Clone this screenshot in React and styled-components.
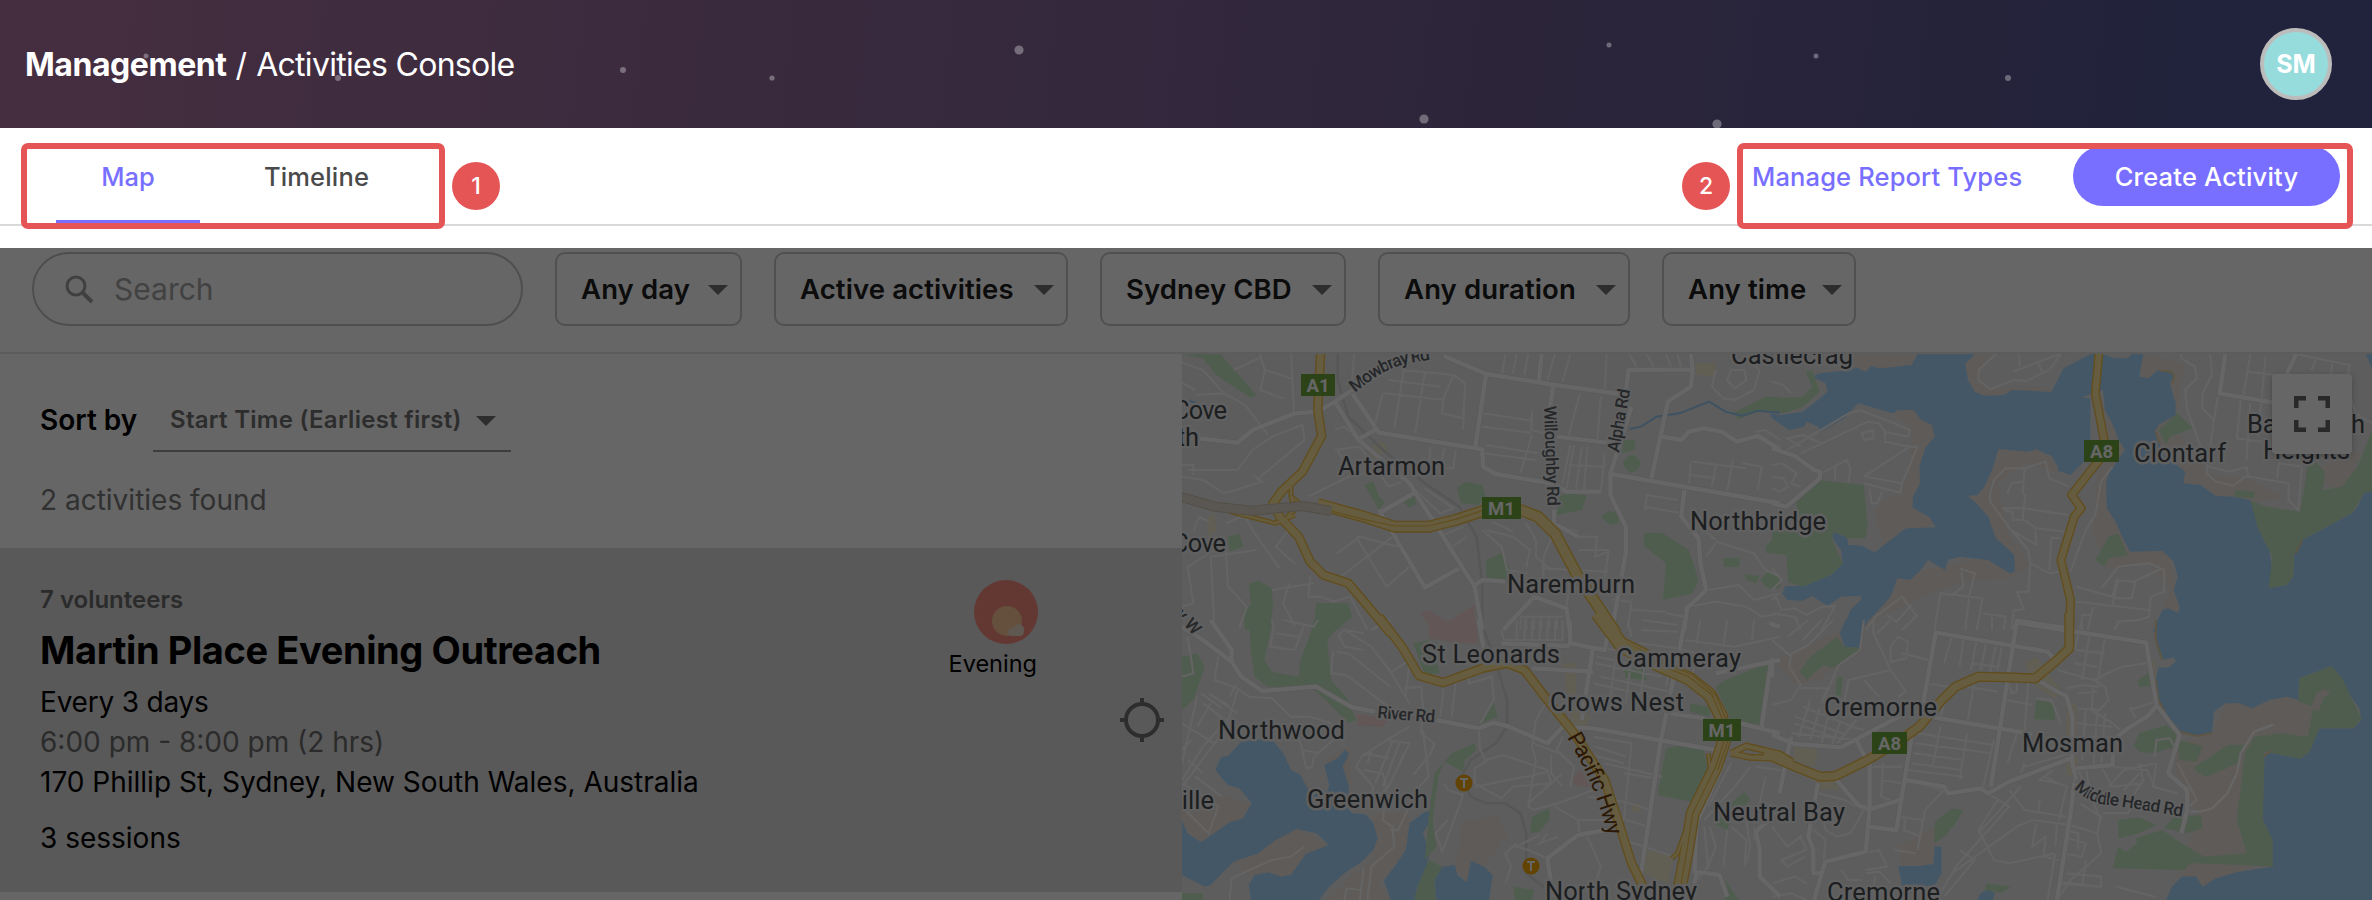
import React from "react";
import styled, { createGlobalStyle } from "styled-components";

const GlobalStyle = createGlobalStyle`
  * { box-sizing: border-box; }
  html, body { margin: 0; padding: 0; background: #fff; }
  body { font-family: Inter, "Liberation Sans", sans-serif; color: #000; }
`;

const Page = styled.div`
  position: relative;
  width: 2372px;
  height: 900px;
  overflow: hidden;
  display: flex;
  flex-direction: column;
`;

/* Header */
const Header = styled.header`
  position: relative;
  height: 128px;
  flex: none;
  display: flex;
  align-items: center;
  justify-content: space-between;
  padding: 0 40px 0 25px;
  background: linear-gradient(97deg, #452e40 0%, #3a2a3e 32%, #2b253a 66%, #21223b 92%, #21233d 100%);
`;
const Stars = styled.svg`
  position: absolute;
  inset: 0;
  width: 100%;
  height: 100%;
`;
const Title = styled.h1`
  position: relative;
  margin: 0;
  display: flex;
  gap: 9px;
  padding-top: 1px;
  font-size: 32px;
  line-height: 40px;
  font-weight: 400;
  color: #fff;
  white-space: nowrap;
`;
const Crumb = styled.span`
  font-weight: ${(p) => (p.$strong ? 700 : 400)};
  letter-spacing: ${(p) => p.$track || 0}px;
`;
const Avatar = styled.div`
  position: relative;
  width: 72px;
  height: 72px;
  border-radius: 50%;
  border: 4px solid #bcbcbc;
  background: #96dcdd;
  color: #fff;
  display: flex;
  align-items: center;
  justify-content: center;
  font-size: 25px;
  font-weight: 700;
`;

/* Tab bar */
const TabBar = styled.nav`
  height: 98px;
  flex: none;
  display: flex;
  justify-content: space-between;
  padding: 0 32px 0 56px;
  border-bottom: 2px solid #d9d9d9;
  background: #fff;
`;
const Tabs = styled.div`
  display: flex;
  gap: 20px;
`;
const Tab = styled.div`
  width: ${(p) => p.$w}px;
  display: flex;
  align-items: center;
  justify-content: center;
  padding-top: ${(p) => (p.$active ? 5 : 1)}px;
  border-bottom: ${(p) => (p.$active ? "4px solid #786eff" : "0")};
  color: ${(p) => (p.$active ? "#786eff" : "#4a4a4a")};
  font-size: 25.5px;
  font-weight: 500;
  letter-spacing: ${(p) => p.$track || 0}px;
`;
const Actions = styled.div`
  display: flex;
  align-items: center;
  gap: 52px;
  padding-top: 0;
`;
const LinkAction = styled.a`
  width: 269px;
  color: #786eff;
  font-size: 25.5px;
  font-weight: 500;
  letter-spacing: 0.15px;
  white-space: nowrap;
`;
const PrimaryButton = styled.button`
  width: 267px;
  height: 60px;
  padding: 0;
  border: 0;
  border-radius: 30px;
  background: #786eff;
  color: #fff;
  font: 500 25.5px Inter, sans-serif;
  letter-spacing: 0.2px;
`;

/* Filters */
const FilterBar = styled.section`
  height: 128px;
  flex: none;
  display: flex;
  align-items: flex-start;
  gap: 32px;
  padding: 26px 32px 0;
  border-bottom: 2px solid #e6e6e6;
`;
const SearchBox = styled.div`
  width: 491px;
  height: 74px;
  border: 2px solid #c4c4c4;
  border-radius: 37px;
  display: flex;
  align-items: center;
  gap: 20px;
  padding-left: 30px;
  color: #a6a6a6;
  font-size: 30px;
`;
const Select = styled.div`
  width: ${(p) => p.$w}px;
  height: 74px;
  border: 2px solid #c8c8d0;
  border-radius: 10px;
  display: flex;
  align-items: center;
  justify-content: space-between;
  padding: 0 12px 0 24px;
  font-size: 27.5px;
  font-weight: 600;
  color: #202020;
  white-space: nowrap;
  letter-spacing: 0.12px;
`;
const Caret = styled.span`
  flex: none;
  margin-top: 2px;
  border: 10px solid transparent;
  border-bottom: 0;
  border-top-color: #707070;
`;

/* Content */
const Content = styled.main`
  flex: 1;
  min-height: 0;
  display: flex;
`;
const ListPane = styled.section`
  width: 1182px;
  flex: none;
`;
const SortRow = styled.div`
  display: flex;
  align-items: flex-start;
  gap: 16px;
  padding: 32px 0 0 40px;
`;
const SortLabel = styled.div`
  width: 97px;
  font-size: 28px;
  line-height: 68px;
  font-weight: 600;
  white-space: nowrap;
`;
const SortSelect = styled.div`
  width: 358px;
  height: 66px;
  border-bottom: 2px solid #999;
  display: flex;
  align-items: center;
  justify-content: space-between;
  padding: 3px 15px 0 17px;
  font-size: 24px;
  font-weight: 600;
  color: #707070;
  letter-spacing: 0.28px;
  white-space: nowrap;
`;
const Found = styled.div`
  padding: 26px 0 28px 40px;
  font-size: 28px;
  line-height: 40px;
  color: #7a7a7a;
`;
const Card = styled.article`
  height: 344px;
  background: #dedede;
  display: flex;
  justify-content: space-between;
  padding: 32px 18px 0 40px;
`;
const CardText = styled.div`
  display: flex;
  flex-direction: column;
`;
const Line = styled.div`
  font-size: ${(p) => p.$size || 28}px;
  line-height: ${(p) => p.$lh || 40}px;
  font-weight: ${(p) => p.$weight || 400};
  color: ${(p) => (p.$muted ? "#6c6c6c" : "#000")};
  margin-top: ${(p) => p.$gap || 0}px;
  letter-spacing: ${(p) => p.$track || 0}px;
  white-space: nowrap;
`;
const CardSide = styled.div`
  display: flex;
  gap: 81px;
`;
const TimeOfDay = styled.div`
  width: 92px;
  display: flex;
  flex-direction: column;
  align-items: flex-end;
  font-size: 23.5px;
  line-height: 36px;
  svg { display: block; margin-right: 1px; margin-bottom: 2px; }
`;
const TimeName = styled.span`
  margin-right: 2px;
`;
const Locate = styled.svg`
  width: 44px;
  height: 44px;
  margin-top: 118px;
`;
const MapPane = styled.section`
  position: relative;
  flex: 1;
  overflow: hidden;
  background: #e8e8e8;
`;
const MapSvg = styled.svg`
  display: block;
  width: 1190px;
  height: 546px;
`;
const FullscreenButton = styled.div`
  position: absolute;
  top: 20px;
  right: 20px;
  width: 80px;
  height: 80px;
  background: #fff;
  border-radius: 4px;
  box-shadow: 0 2px 6px rgba(0, 0, 0, 0.25);
  display: flex;
  align-items: center;
  justify-content: center;
`;

/* Tour overlay */
const Dim = styled.div`
  position: absolute;
  inset: 248px 0 0 0;
  background: rgba(0, 0, 0, 0.6);
`;
const Highlight = styled.div`
  position: absolute;
  left: ${(p) => p.$x}px;
  top: 143px;
  width: ${(p) => p.$w}px;
  height: 86px;
  border: 6px solid #e55555;
  border-radius: 7px;
`;
const Marker = styled.div`
  position: absolute;
  left: ${(p) => p.$x}px;
  top: 162px;
  width: 48px;
  height: 48px;
  border-radius: 50%;
  background: #e55555;
  color: #fff;
  display: flex;
  align-items: center;
  justify-content: center;
  font-size: 23px;
  font-weight: 500;
`;

const stars = [
  [146, 56, 2.5], [338, 78, 3], [623, 70, 3], [772, 78, 2.6], [1019, 50, 4.6], [1424, 119, 4.6],
  [1609, 45, 2.5], [1717, 124, 4.6], [1816, 56, 2.5], [2008, 78, 3],
];

/* The map is drawn as four tiles, each with its own 1568 x 840 grid. */
const TILES = {
  nw: "translate(1180 350) scale(.38265 .33333)",
  ne: "translate(1772 350) scale(.38265 .33333)",
  sw: "translate(1180 620) scale(.38265 .33333)",
  se: "translate(1772 620) scale(.38265 .33333)",
};

const earth = {
  nw: "",
  ne: "M205 12H380L365 60L205 75ZM315 190L330 170L370 170L440 260L400 400L420 520L300 620L265 480L350 400L370 240ZM500 12H590L540 60L560 110L700 110L740 126L600 150L520 130ZM580 290L700 290L760 370L660 340L590 400L620 560L680 650L600 690L500 440ZM860 150L920 300L870 420L930 600L1030 590L1070 770L1000 845L1040 720L980 640L880 660L840 560L850 380ZM960 12L1080 40L1050 230L1140 370L1250 390L1330 440L1250 460L1000 400ZM1430 350L1540 300L1500 420L1430 400ZM1420 620L1540 610L1540 660L1400 680ZM330 680L560 620L640 680L480 700L300 790L230 845Z",
  sw: "M5 560L100 520L200 560L140 620L60 690L5 640ZM140 730L300 620L400 680L280 790L180 770ZM500 580L600 580L590 700L520 790L560 840L380 840L500 720ZM740 600L830 590L860 640L800 730L750 790L720 740ZM200 350L340 500L330 530L280 440ZM380 420L440 380L450 500Z",
  se: "M1150 340L1190 245L1350 230L1430 260L1410 340L1250 380L1220 600L1260 740L1120 800L1060 760L1100 640L1040 620L1160 560L1200 480L1060 460L1040 380ZM1050 450L1200 430L1180 560L1120 600ZM0 120L180 30L240 90L120 180L60 190ZM330 680L430 620L430 730L340 738Z",
};
const water = {
  nw: "",
  ne: "M380 12L530 12L505 42L512 90L530 125L555 137L605 135L628 120L730 126L762 55L820 20L835 12L865 12L895 25L930 25L940 12L970 12L960 80L985 85L1005 62L1040 60L1052 75L1040 100L1055 160L1055 195L1010 225L1000 245L1015 285L1010 300L1080 365L1075 400L1120 405L1160 438L1210 440L1250 450L1268 490L1270 535L1300 600L1308 660L1298 715L1345 705L1362 680L1365 610L1385 570L1450 530L1515 490L1530 470L1548 427L1568 425L1568 845L995 845L1020 780L1035 775L1060 788L1066 775L1050 720L1060 680L1050 635L1020 603L935 605L915 560L898 515L875 475L873 400L880 370L922 300L915 285L905 270L895 235L870 180L865 120L810 142L832 145L832 270L820 330L780 375L748 362L745 345L730 318L690 298L668 305L592 297L575 360L555 410L537 435L512 438L530 455L565 500L585 565L620 600L633 615L635 665L622 670L600 655L565 630L490 620L460 630L452 660L408 630L385 665L360 690L328 685L310 740L250 815L232 845L182 845L205 780L232 750L233 737L180 740L145 768L105 738L80 752L40 750L27 730L35 708L80 708L160 670L185 640L180 600L158 565L160 545L195 560L200 585L235 587L268 607L350 535L428 532L410 500L367 473L368 440L387 400L385 350L400 295L425 260L418 225L390 210L370 180L330 180L315 190L225 160L190 205L128 245L118 228L90 215L85 230L45 240L0 205L-5 190L20 195L80 185L120 150L145 125L140 100L105 80L125 70L205 60L220 52L245 65L260 48L280 55L310 52L365 45ZM1552 12H1568V55Z",
  sw: "M160 365L205 358L245 365L270 400L290 450L315 465L335 510L385 515L390 495L377 435L412 415L430 390L442 400L425 440L442 500L435 560L450 580L485 583L505 610L517 655L505 690L475 725L435 755L390 800L363 840L185 840L180 795L195 765L230 757L265 770L290 765L328 703L388 675L358 640L305 627L250 660L205 700L140 725L80 795L65 800L5 765L5 600L20 640L55 667L130 607L165 595L187 548L155 505L125 495L92 450L108 410L125 408ZM640 575L660 573L655 600L635 640L652 700L640 760L615 840L550 840L533 780L560 740L590 690L600 610ZM665 780L685 740L718 735L725 765L750 787L760 722L795 740L817 765L808 840L670 840Z",
  se: "M1005 0L1003 60L1010 100L1020 120L1050 112L1055 125L1035 143L1010 142L1003 180L1010 240L1035 295L1065 335L1110 348L1150 340L1155 275L1185 250L1220 250L1255 265L1300 240L1345 230L1375 240L1378 175L1420 160L1462 138L1490 175L1500 210L1535 265L1540 300L1520 325L1430 325L1405 395L1380 417L1310 393L1287 408L1283 510L1283 600L1308 660L1308 740L1220 755L1160 775L1125 800L1108 768L1070 770L1045 800L1030 840L1568 840L1568 0ZM192 0L245 0L233 45L228 83L190 80L177 40ZM425 678L443 680L443 760L425 797L340 798L330 738L385 738L422 732ZM537 840L545 820L565 808L582 820L578 840Z",
};
const parks = {
  nw: "M5 12H105L200 135L185 143L145 115L95 75L60 25ZM482 405L505 392L520 440L535 455L520 480ZM580 450L612 435L618 462L598 473ZM723 415L745 395L790 405L800 440L780 465L735 460ZM985 495L990 440L1010 430L1063 435L1050 480ZM1155 310L1160 270L1190 270L1188 300ZM1157 340Q1180 290 1205 340Q1180 395 1157 340ZM1100 500L1120 482L1150 490L1145 520L1125 525ZM1212 548L1260 548L1330 600L1355 690L1340 730L1262 750L1270 640L1212 588ZM125 560L155 552L165 590L130 605ZM165 780L185 765L180 700L205 692L240 715L243 770L235 840H170ZM355 760L440 760L450 800L410 840H350ZM800 630L840 608L868 665L862 690L800 690ZM1420 625H1462V650H1420ZM1475 672L1515 678L1505 700L1480 690ZM1516 690Q1540 650 1568 680V710Q1540 730 1516 690ZM1530 590L1568 545V610H1532ZM1445 190L1530 140H1568V180L1510 185L1460 208Z",
  ne: "M0 145L80 140L105 110L88 65L105 60L125 125L80 170L30 190L0 185ZM120 390L240 405L250 525L245 565L200 565L160 545L158 570L185 640L155 675L80 710L42 695L38 615L0 610V545L65 540V440ZM0 655L12 685L0 710ZM1010 240L1060 190L1100 235L1040 260L1030 285ZM845 630L880 560L905 550L930 615L880 625L870 650ZM1210 420L1260 425V445L1210 440ZM1250 450L1290 470L1380 485L1400 350L1420 335L1445 365L1440 420L1490 410L1530 350L1568 240V425L1548 427L1515 490L1385 570L1365 610L1362 680L1345 705L1298 715L1308 620L1270 535Z",
  sw: "M180 0H243L220 120L240 155L310 170L315 120L335 60L350 0H430L385 60L395 180L440 240L460 300L440 310L380 240L340 200L230 200L195 170L185 90ZM5 110L45 100L65 140L35 240L5 270ZM610 70L650 60L680 160L640 165ZM790 310L818 240L830 290ZM650 590L665 460L710 400L770 370L775 390L745 420L740 455L690 425L675 470L660 600L670 680L640 720ZM620 800L650 720L685 740L665 780L668 840H612ZM920 590L965 565L965 600L940 635L915 640ZM1270 385L1320 375L1368 390L1380 450L1335 545L1248 525ZM1160 150L1215 140L1220 180L1165 175ZM1335 250L1385 260L1385 290L1332 275ZM1425 180L1545 125L1515 315L1440 300L1400 200ZM1395 610L1440 550L1475 515L1490 540L1440 600L1430 630ZM870 800L925 810L920 840H875ZM1425 780L1460 840H1425ZM5 820H60V840H5Z",
  se: "M72 155L100 110L170 50L190 80L235 85L180 130L155 145L135 135L90 180ZM165 225L170 175L185 170L180 230ZM690 240L735 250L740 300L685 298ZM955 180L985 160L988 198L960 200ZM945 375L960 340L1030 315L1060 345L1050 380L1000 400L960 395ZM1060 360L1125 378L1110 425L1065 420ZM1100 445L1190 375L1235 375L1215 430L1180 450L1130 470ZM1378 175L1462 138L1490 175L1540 295L1520 325L1430 325L1405 395L1380 417L1287 395L1283 600L1308 660V740L1225 735L1090 730L1080 750L890 745L905 680L925 695L955 670L950 655L1020 630L1070 670L1130 710L1240 700L1215 600L1235 400L1260 350L1330 340L1400 350L1415 260L1375 245ZM905 600L960 592L1005 615L960 640L905 655ZM1025 625L1050 590L1120 585L1125 625L1080 640ZM425 670V605L470 565L500 570L480 610L450 650ZM560 790L625 800L600 818L555 810Z",
};
const pink = {
  sw: "M650 0H775L778 70L720 68L650 55ZM460 280L545 300L530 320L465 318ZM1025 470L1050 450L1070 500L1030 495Z",
  nw: "M630 790L650 780L700 815L770 765V840H660Z",
};
const tan = {
  nw: "M480 295L535 275L540 300L510 330ZM1345 40H1400V80L1350 75ZM70 510L90 485L95 540L75 560Z",
  sw: "M1000 130H1035V230L1070 290L1060 330L1025 310ZM1215 690L1290 705L1275 790L1210 760ZM1180 550H1205V575H1180Z",
  se: "M60 370L120 390L110 440L55 420ZM660 130L690 110L760 220L740 235L690 200ZM770 250H795L800 480L770 460ZM110 480L185 480L170 510L120 510ZM985 120L1000 120L1005 200Z",
};

const minor = {
  nw: "M0 35L60 60L115 130L170 165L230 255M115 130L40 135M0 95L40 120M208 12L222 60L210 120L270 145M290 12L298 185M222 60L290 85M140 60L215 20M455 12L450 90M580 60L715 75L745 100L740 205L685 190L690 140L715 75M545 90L680 110M535 130L690 150M585 60L560 235M640 65L615 250M530 130L510 220M880 12L870 70M910 12L900 75M850 12L842 70M920 185L918 240L955 250M790 190L920 212M790 230L918 248M800 285L935 310M795 310L930 330M920 255L890 370M1045 130L1015 260M1100 140L1090 275M1020 285L1000 400M1050 290L1035 420M1030 285L1010 415M1065 290L1055 425M1015 345L1110 350M1110 310L1100 425M1115 12L1110 120M1175 12L1195 55M1220 12L1240 55M1270 12L1285 55M1300 12L1310 55M980 12L960 90M1020 12L1000 95M1340 335L1480 355M1335 335L1330 400M1400 345L1390 410M1445 330L1430 425M1470 340L1520 350L1510 420M1335 375L1400 385M405 240L430 230L470 270M410 300L460 380L500 360M405 300L470 290L545 410L580 395M655 290L650 350M690 295L680 360M720 300L715 355L690 355M740 240L745 95M5 380L60 390L115 430L215 395L190 375M190 300L240 260L320 225L325 270L200 390M190 300L150 360L20 360M5 345H35V375M335 440L450 375M640 415L715 475L680 490L620 425M80 620L90 835M35 545L50 500L75 515M90 600L20 650L35 760L5 770M120 600L125 710L175 770L155 835M80 620L200 600M260 655L195 550L170 500M160 500L120 520M285 540L250 590L300 640M285 700L270 760L300 830M340 680L335 740L370 740L400 755L445 740L490 840M240 720L350 700M410 690L555 560M540 710L610 640M460 560L540 710M410 610L470 560L570 590M700 600L750 560M680 560L740 530M790 540L840 590L855 660L910 670M800 540L870 560L915 600L905 650M815 515L870 545M905 520L930 570L930 620L970 660M980 540L950 620L950 700M1040 560L1090 560L1085 620L1120 605L1110 680M990 530L1040 545M1040 600L1120 600M945 655L1120 665M940 690L1110 700M1020 690L1010 770M890 840V800H1000M905 800V840M925 800V840M945 800V840M965 800V840M985 800V840M1130 750L1180 755L1170 835M1180 780L1270 785M1215 480L1220 435L1300 450M1215 470L1310 490M1400 580L1375 620M1400 575L1500 610L1530 660L1568 680M1400 570L1370 540M1380 720L1460 705L1500 750L1568 730M1330 770L1400 755L1480 770L1520 800L1568 790M1270 790L1320 800M1505 245L1530 240L1568 270M1400 60L1390 110L1420 145L1450 150L1500 120L1515 60L1480 30M1440 60L1430 90L1450 115L1480 90L1475 60Z",
  ne: "M0 95L30 105L50 130M75 290L40 265L80 255L130 280M40 300L200 190L230 180L320 220L360 240L355 260L295 245M75 310L250 215L280 220L295 245V275L360 290L380 290L340 400L335 428L240 400M235 250L265 240V265L240 270ZM130 370L195 330L205 355L200 400M165 345V390M240 380L360 290M245 380L340 400M255 415L260 460H275L288 425M0 345L25 340L65 370L50 400L75 410M0 380L30 385L42 410L20 425L0 415M585 12L540 60V90L570 118L630 90L665 92L725 60L755 12M630 65L750 12M645 12L648 50M695 40L708 68M775 410L725 385L715 335L660 355L610 355L580 390L570 430V455L625 540L690 585L688 540M660 355L655 430L662 435L658 475L655 510L630 510L628 485L605 480M615 430L625 400L655 395M600 475L660 475L775 495M660 510L690 535L765 545M890 350L860 395L845 495L820 540L780 665M625 540L670 600L675 640L725 670L750 665M755 565L730 563L725 660M675 640L670 725H640L658 778L632 780L625 840M860 715L905 650L985 640L1025 660V725L990 740L985 800L960 810L905 815L895 840M795 710L890 740L900 690L945 695L1020 655M890 765L905 690M890 745L940 745L950 695M795 755L985 780M840 770L825 840M810 840V795L835 795M495 665L500 710L470 735L440 730L425 840M490 655L530 670L515 740M440 730L550 745L535 840M515 745L505 840M550 790L610 800L605 840M575 800V840M245 840L270 800L340 740L378 798L340 840M300 795L325 815L365 765M0 655L25 690L0 720M0 750L10 740L25 780L60 775L90 795L130 770L165 768L130 840M0 790L60 800L75 840M1070 12V25L1105 50L1110 85L1080 120L1085 180L1140 350L1195 365L1240 350L1245 375M1145 12L1150 75L1125 130V175L1155 210M1250 12L1230 150M1290 20L1270 260M1425 20L1410 60M1465 40L1460 75M1165 140L1155 210L1135 370L1160 395L1205 408L1240 378L1350 400V450L1375 480L1385 350M1225 150L1215 265L1280 275M1250 160L1240 330M1240 65L1390 85M1320 385L1325 340L1385 350M1365 12L1510 45L1500 100M1515 150L1525 190L1568 220",
  sw: "M100 110L90 180L150 205L180 230L240 235L290 290L340 290L395 310L400 340M240 0L245 25L235 80L300 90L325 12M360 0L350 20L270 0M250 40L310 50M20 50L35 160L5 170M145 195L130 230M75 220L150 280M45 230L5 430M60 250L130 310L5 500M80 250L45 320M90 230L130 260M5 310L90 370M30 360L5 390M20 420L60 460M150 210L130 290L60 380L5 480M55 220L110 265M5 490L80 540L100 560L75 640L5 560M40 470L110 530M315 370L330 445L345 440L350 410L400 360M310 350L320 390L365 400M475 410L540 360L600 370L545 500L500 550L505 500L460 440L480 400L545 415M555 365L510 490M575 365L530 500M500 395L490 430M585 400L570 440M480 450L530 460L540 510L530 600L555 620L560 680L500 740L490 840M430 30L500 80L550 155L600 250M400 95L395 160L435 165L550 265M410 95L440 100L550 200M480 40L430 30L415 45L430 80L480 90M550 0L500 30M555 155L600 120L590 230M585 205L630 200L635 260L630 340L665 370L655 400L610 465M600 320L540 360M635 330L650 470L625 500M720 190L710 290M690 195L680 290M755 165L755 190L815 170L820 240L785 310M780 320L785 390L800 425L770 445V490L840 535L870 500L970 490L960 450L845 405L800 420M770 500L925 465L960 455M960 240L930 300L920 380L930 420L910 560L925 570L1000 545L1080 510M970 405V460L1000 500M1000 350L985 390L1030 440L1020 500M925 370L990 400M910 550L1000 460M690 490L700 510L740 525L700 650L685 695L668 640L700 600M980 560L1040 600L1160 600M1040 605L1045 640M940 645L880 680L910 690L960 715M880 670L850 700L865 740L850 790M960 640L940 670L990 650M1065 530L1160 545M1060 640L1100 740L1085 790M1080 350L1180 370M1085 380L1165 410M1060 400L1160 430M1110 430L1260 470M1180 370L1160 600M1160 460L1240 475M1160 545L1230 570M1165 600L1225 620M1160 660L1290 710M1085 80L1240 110M1090 110L1220 140M1100 170L1280 215M1080 190L1270 240M1085 130L1260 170M1140 100L1125 230M1180 110L1165 250M1215 130L1200 260M860 0L840 35L850 70M880 0V60M900 0V60M920 0V60M940 0V60M960 0V60M980 0V60M1000 0V60M850 60H1000M1170 0L1180 50M1205 30L1300 35M1210 0L1300 15M1200 70L1300 85M1320 60L1450 80L1568 50M1360 0L1350 70M1430 0L1420 75M1500 0L1495 60M1300 85L1420 120M1290 90L1270 200M1350 100L1340 160M1370 620L1380 740L1350 780M1385 620L1400 680L1380 740M1430 630L1420 740M1440 620L1480 660L1475 740M1480 600L1490 680L1480 730M1500 620L1500 660M1440 430L1380 560M1490 440L1450 500L1370 600M1505 440L1568 450M1530 470L1515 550L1568 560M130 840L135 775L240 720L290 710L325 680M430 840L435 805L470 810M480 745L470 840M550 630L570 630L600 560",
  se: "M0 60L45 105L95 75L160 0M40 50L95 0M130 0L80 60M50 100L45 140L75 195L50 240L0 255M75 205L145 205L130 240M265 0L265 40L310 150L350 215L330 230M240 0L230 90L175 135L130 250M310 150L200 180L190 240M240 180L280 230M310 80L330 50L355 65L350 115L310 125ZM275 40L310 0M470 50L450 130M500 60L490 140M535 60L520 150M560 65L545 155M585 75L570 160M600 80L590 150M410 120L340 100M405 190L460 200M510 200L590 215M520 130L590 140M460 220L440 290M530 180L510 310M610 240L680 255M640 190V215L625 220L620 190M670 180L660 330M690 235L730 240L755 310M830 45L810 180M870 50L850 190M795 90L870 100M790 130L850 140M810 0L790 90M745 150L840 180L870 200L880 240L855 270L800 265M770 205L810 195L860 200M800 220L850 215M840 200L835 270L890 310L910 330M840 180L915 140L980 130M935 270L1000 245M935 260L950 295M820 265L810 420M850 270L840 440M870 280L860 440M795 310L890 320M795 350L880 350M380 340L580 375M375 370L575 400M370 400L500 420M365 430L495 450M355 450L500 470M440 320L420 440M510 340L490 480M580 360L550 510M640 340L615 430M660 430L650 460M660 440L780 400M60 290L185 340M80 260L210 320M100 240L70 350M125 265L100 360M150 270L130 370M180 300L155 380M60 310L170 355M50 340L220 360M220 300L170 370M205 320L240 330M240 400L250 440L340 440M290 430L285 530L330 550M285 480L340 490M340 480L450 510L400 570L380 690M330 590L395 600M320 690L375 700M350 590L345 630L390 650M120 520L190 540L240 570L205 640L170 650L140 630L130 570M100 620L140 660L135 720M0 620L40 680L75 650L90 690L25 720L40 740L85 710M0 790L60 770L90 790M0 830L50 820L90 840M240 700L280 690L300 740L245 750M180 750L200 780H235M245 760L280 755L310 790M260 840L270 770M430 840L480 740L620 560L550 510M540 640L650 500M470 760L640 620L680 600L780 615M590 540L540 630L580 720L620 730L740 700M490 690L530 720L450 830M620 510L660 570L770 590M700 540L695 580M735 450L700 480L745 490M710 470L770 500L750 600M790 480L780 610M745 610L740 680M780 615L850 640L860 700L780 780L745 840M760 650L820 670L810 710L760 700M765 630L800 640V690M690 610L680 680L715 650L710 710L750 720M805 550L860 590L850 640M820 440L830 520M800 450L860 600M860 440L890 500L970 490M880 500L920 450L1000 430M940 560L930 580L865 580M960 430L970 480L930 550M1005 430L995 500L1060 520M920 510L960 460M890 440L980 450L1000 500M1000 410L1005 360L1040 355L1055 390M1060 430L1110 540L1080 570M770 760L860 770V800L745 785M745 790L860 800M820 720L810 800M900 800L1000 830M740 700L720 840",
};
const road = {
  nw: "M5 260L150 278L190 240L300 190L360 185L405 155L450 120L620 12M690 18L800 72L980 105L1170 135M800 72L772 290M945 12L938 90M1165 130L1172 60L1340 58L1335 12M1340 58L1335 110L1275 155L1232 385M975 110L955 260M450 130L520 248L790 298L792 350L825 372L980 402L1010 425L1100 425M405 155L465 268L510 240M465 268L600 400L770 710L790 840M520 490L610 430M520 480L640 712L730 655M985 260L1130 280M1180 170L1125 370L1125 435L1165 530V610L1135 800L1130 835M1125 372L1568 460M1318 420L1310 500L1355 565L1360 640L1375 720L1325 775L1318 840M1260 260L1310 270L1330 245L1370 235L1415 245L1455 275L1510 258L1568 298M978 480L978 520L1040 560M845 840L925 740L1010 775L1018 840M770 705L790 690L850 695",
  ne: "M0 295L60 318L110 360L125 365V385L38 470L0 460M1185 12L1170 130L1310 158M1310 158L1370 12M632 840L640 812L775 835",
  sw: "M5 20L60 60L135 125L160 170L215 213L355 200L450 262L510 275M670 300L780 325L820 308L860 320L960 370L1000 320L1080 325L1400 390M80 0L135 90V125M1018 0L1020 70L1110 90L1120 30M780 0L795 95M840 70L1018 78M920 145L1080 155M1080 80L1050 300M1568 20L1540 10M1320 0L1305 90M1305 90L1255 370L1205 760M1400 160L1568 120M1465 310L1568 340M1545 125L1520 320M1280 280L1370 295M1115 630L1040 645L960 715L975 830M1568 570L1505 635L1515 690V770L1568 830M1345 755L1410 765L1430 830M1350 760L1335 840M1420 430L1350 610L1345 760",
  se: "M0 345L60 372L180 382L340 285M395 250L428 38L720 95L745 125M640 0L572 500M640 8L978 68L1005 255L1065 345L1035 460L1085 510V570L1070 640M410 290L680 342M0 115V170M50 350L35 430L20 520M120 490L95 650L108 690V760H130L140 725L245 695L255 570V410M165 475L225 555L255 568L335 540M365 350L325 630L250 620M350 480L450 500L460 520L545 505L565 520L620 485L780 415M700 185L770 230L785 290V430L795 480M795 445L890 435L892 360L930 325L980 290L1005 258M220 360L245 415M130 760L110 840M790 490L780 580L745 840",
};
const trackRoad = { se: "M1085 575H1120L1150 565L1190 520L1215 460L1225 400L1260 335L1308 315" };
const creeks = { nw: "M1175 237L1205 230L1245 200L1305 190L1383 155L1425 185L1470 197L1510 182L1568 188M5 145L45 160L70 175" };
const rail = {
  nw: "M412 12L412 90L440 200L530 300L640 400L730 470L775 560L790 700V840",
  sw: "M785 0L820 110L855 240V320L825 370L760 420L735 470L760 530L800 550H850L890 580L905 640V760L950 800",
};
const tunnel = { nw: "M-5 438L90 470L190 482L320 468L395 483" };
const highway = [
  { t: "nw", d: "M368 0L360 180L370 258L320 365L265 425L243 460L260 500L310 560L340 635L375 675L440 700L485 760L550 850", w: 9.5 },
  { t: "nw", d: "M290 400V440L325 470M290 440L300 480L280 500M130 485L250 520L300 495M395 470L300 462", w: 5 },
  { t: "sw", d: "M520 -10L580 80L625 167L688 188L790 145L855 130L900 150L960 240L1030 340L1110 480L1150 620L1180 730L1215 810", w: 9.5 },
  { t: "nw", d: "M360 462L480 500L560 530L650 530L720 510L800 480L890 480L935 500L980 550L1040 680L1140 850", w: 12 },
  { t: "sw", d: "M1090 -20L1155 80L1230 125L1330 175L1385 225L1415 290L1420 370L1400 440L1340 580L1325 690L1305 810", w: 14 },
  { t: "sw", d: "M1110 -20L1160 60L1230 100M1380 400L1385 440M1325 620L1300 700L1285 715", w: 5 },
  { t: "sw", d: "M1440 400L1480 378L1568 402L1600 425M1440 400L1490 412L1568 415", w: 7 },
  { t: "se", d: "M-20 400L60 440L125 470L165 468L250 420L330 365L385 320L440 245L480 200L540 170L610 172L688 175L745 120L777 85V-20", w: 10 },
  { t: "ne", d: "M777 850L780 750L755 630L790 500L808 475L783 435L855 330L868 270L845 130L855 0", w: 9 },
];
const inner = [
  { t: "nw", d: "M395 483L480 508L560 528L650 528L720 508L800 478" },
  { t: "sw", d: "M1230 125L1330 170L1390 225L1415 290L1420 370L1400 440L1340 580L1325 690L1308 800M1220 110L1340 165L1400 225L1428 300L1430 370L1405 450" },
];

const places = [
  ["Artarmon", 1338, 475, 107], ["Northbridge", 1690, 530, 136], ["Naremburn", 1507, 593, 128], ["Castlecrag", 1731, 364, 122],
  ["Clontarf", 2134, 462, 92], ["Balgowlah", 2247, 433, 118], ["Heights", 2263, 459, 87], ["St Leonards", 1422, 663, 138],
  ["Cammeray", 1616, 667, 125], ["Crows Nest", 1550, 711, 134], ["Northwood", 1218, 739, 127], ["Greenwich", 1307, 808, 121],
  ["Neutral Bay", 1713, 821, 132], ["North Sydney", 1545, 900, 152], ["Cremorne", 1824, 716, 113], ["Mosman", 2022, 752, 101],
  ["Cremorne", 1827, 901, 113], ["Cove", 1173, 419, 54], ["Cove", 1172, 552, 54], ["North", 1138, 446, 61], ["Longueville", 1085, 809, 129],
];
const shields = [["A1", 1301, 374, 34], ["M1", 1482, 497, 39], ["A8", 2084, 440, 35], ["M1", 1703, 719, 38], ["A8", 1872, 732, 35]];

function Layer({ data, ...rest }) {
  return (
    <g {...rest}>
      {Object.entries(data).map(([tile, d]) => (
        <path key={tile} transform={TILES[tile]} d={d} vectorEffect="non-scaling-stroke" />
      ))}
    </g>
  );
}

function Highways({ color, trim }) {
  return highway.map((h, i) => (
    <path key={i} transform={TILES[h.t]} d={h.d} fill="none" stroke={color} strokeWidth={h.w - trim} strokeLinejoin="round" vectorEffect="non-scaling-stroke" />
  ));
}

function SydneyMap() {
  const label = { fontFamily: "Roboto, sans-serif", paintOrder: "stroke", stroke: "#f0f0f0", strokeWidth: 5, strokeLinejoin: "round" };
  return (
    <MapSvg viewBox="1182 354 1190 546">
      <Layer data={earth} fill="#ece3dc" />
      <Layer data={water} fill="#aadaff" />
      <Layer data={parks} fill="#c5e8c5" />
      <Layer data={pink} fill="#f4d8d6" />
      <Layer data={tan} fill="#f3ead0" />
      <Layer data={{ se: "M1410 265L1422 220L1445 207L1460 220L1440 235L1430 272Z" }} fill="#ece3dc" />
      <Layer data={{ se: "M1003 0V60L1020 120M1003 180L1010 240L1035 295L1065 335L1110 348L1150 340M1285 408L1305 393", ne: "M1015 62Q1065 60 1045 100M1003 245L1013 280M1385 572L1368 610" }} fill="none" stroke="#ead8a8" strokeWidth="2" />
      <Layer data={creeks} fill="none" stroke="#99ccf5" strokeWidth="2" />
      <Layer data={rail} fill="none" stroke="#d6d8da" strokeWidth="2.5" />
      <Layer data={minor} fill="none" stroke="#fbfbfb" strokeWidth="2" />
      <Layer data={trackRoad} fill="none" stroke="#fff" strokeWidth="2.4" strokeLinecap="round" />
      <Layer data={road} fill="none" stroke="#dcdcdc" strokeWidth="5.4" strokeLinejoin="round" />
      <Layer data={road} fill="none" stroke="#fff" strokeWidth="4.4" strokeLinejoin="round" />
      <Highways color="#f2c14a" trim={0} />
      <Highways color="#ffe9a0" trim={2.8} />
      {inner.map((h, i) => (
        <path key={i} transform={TILES[h.t]} d={h.d} fill="none" stroke="#f2c14a" strokeWidth="1.2" vectorEffect="non-scaling-stroke" />
      ))}
      <Layer data={tunnel} fill="none" stroke="#cdc4b0" strokeWidth="10" strokeLinejoin="round" />
      <Layer data={tunnel} fill="none" stroke="#e0dacd" strokeWidth="8" strokeLinejoin="round" />
      {shields.map(([name, x, y, w]) => (
        <g key={name + x}>
          <rect x={x} y={y} width={w} height="22" fill="#6fa83c" />
          <text x={x + w / 2} y={y + 17.5} textAnchor="middle" fontFamily="Roboto, sans-serif" fontSize="18.5" fontWeight="700" fill="#fff">{name}</text>
        </g>
      ))}
      {[[1464, 783], [1531, 866]].map(([x, y]) => (
        <g key={x}>
          <circle cx={x} cy={y} r="8.6" fill="#f5a800" />
          <path d={`M${x - 4} ${y - 4}H${x + 4}M${x} ${y - 4}V${y + 5}`} stroke="#fff" strokeWidth="2" />
        </g>
      ))}
      <g {...label} fontSize="25.5" fill="#464b52">
        {places.map(([name, x, y, w]) => (
          <text key={name + x} x={x} y={y} textLength={w}>{name}</text>
        ))}
      </g>
      <defs>
        <path id="mowbray" d="M1355 393Q1385 367 1410 363T1450 357" />
        <path id="middleHead" d="M2074 788Q2088 803 2108 805T2190 818" />
        <path id="pacific" d="M1567 737Q1583 765 1591 784T1611 845" />
      </defs>
      <g {...label} strokeWidth="3.5" fontSize="17.3" fill="#5c6168" fontWeight="500">
        <text textLength="84"><textPath href="#mowbray">Mowbray Rd</textPath></text>
        <text textLength="114"><textPath href="#middleHead">Middle Head Rd</textPath></text>
        <text transform="translate(1544 406) rotate(88)" textLength="100">Willoughby Rd</text>
        <text transform="translate(1619 453) rotate(-80)" textLength="64">Alpha Rd</text>
        <text transform="translate(1377 718) rotate(4.5)" textLength="58">River Rd</text>
        <text transform="translate(1175 615) rotate(48)">y W</text>
      </g>
      <text fontFamily="Roboto, sans-serif" fontSize="22" fill="#6b3a0b" textLength="108"><textPath href="#pacific">Pacific Hwy</textPath></text>
    </MapSvg>
  );
}

const filters = [
  { label: "Any day", w: 187 },
  { label: "Active activities", w: 294 },
  { label: "Sydney CBD", w: 246 },
  { label: "Any duration", w: 252 },
  { label: "Any time", w: 194 },
];

export default function App() {
  return (
    <>
      <GlobalStyle />
      <Page>
        <Header>
          <Stars viewBox="0 0 2372 128">
            {stars.map(([x, y, r]) => (
              <circle key={x} cx={x} cy={y} r={r} fill="#fff" opacity="0.32" />
            ))}
          </Stars>
          <Title>
            <Crumb $strong $track={-0.45}>Management</Crumb>
            <Crumb>/</Crumb>
            <Crumb $track={-0.7}>Activities Console</Crumb>
          </Title>
          <Avatar>SM</Avatar>
        </Header>
        <TabBar>
          <Tabs>
            <Tab $active $w={144}>Map</Tab>
            <Tab $w={193} $track={0.15}>Timeline</Tab>
          </Tabs>
          <Actions>
            <LinkAction>Manage Report Types</LinkAction>
            <PrimaryButton>Create Activity</PrimaryButton>
          </Actions>
        </TabBar>
        <FilterBar>
          <SearchBox>
            <svg width="30" height="30" viewBox="0 0 30 30" fill="none" stroke="#a0a0a0">
              <circle cx="12" cy="12" r="9" strokeWidth="3" />
              <path d="M18 18L28 28" strokeWidth="4" />
            </svg>
            Search
          </SearchBox>
          {filters.map((f) => (
            <Select key={f.label} $w={f.w}>{f.label}<Caret /></Select>
          ))}
        </FilterBar>
        <Content>
          <ListPane>
            <SortRow>
              <SortLabel>Sort by</SortLabel>
              <SortSelect>Start Time (Earliest first)<Caret /></SortSelect>
            </SortRow>
            <Found>2 activities found</Found>
            <Card>
              <CardText>
                <Line $size={24} $weight={600} $muted>7 volunteers</Line>
                <Line $size={38} $weight={700} $lh={60} $track={-0.4}>Martin Place Evening Outreach</Line>
                <Line $gap={2} $track={-0.2}>Every 3 days</Line>
                <Line $muted>6:00 pm - 8:00 pm (2 hrs)</Line>
                <Line>170 Phillip St, Sydney, New South Wales, Australia</Line>
                <Line $gap={16}>3 sessions</Line>
              </CardText>
              <CardSide>
                <TimeOfDay>
                  <svg width="64" height="64" viewBox="0 0 64 64">
                    <circle cx="32" cy="32" r="32" fill="#f88c80" />
                    <circle cx="33" cy="41" r="15" fill="#fbc896" />
                    <path d="M38 56Q34 56 34 52Q34 48 39 48Q41 44 45 44Q50 45 50 50Q50 56 46 56Z" fill="#eadccb" />
                  </svg>
                  <TimeName>Evening</TimeName>
                </TimeOfDay>
                <Locate viewBox="0 0 44 44" fill="none" stroke="#707070" strokeWidth="4">
                  <circle cx="22" cy="22" r="16" />
                  <path d="M22 0V6M22 38V44M0 22H6M38 22H44" />
                </Locate>
              </CardSide>
            </Card>
          </ListPane>
          <MapPane>
            <SydneyMap />
            <FullscreenButton>
              <svg width="36" height="36" viewBox="0 0 36 36" fill="none" stroke="#666" strokeWidth="4.5">
                <path d="M2.25 12V2.25H12M24 2.25H33.75V12M33.75 24V33.75H24M12 33.75H2.25V24" />
              </svg>
            </FullscreenButton>
          </MapPane>
        </Content>
        <Dim />
        <Highlight $x={21} $w={424} />
        <Marker $x={452}>1</Marker>
        <Highlight $x={1737} $w={616} />
        <Marker $x={1682}>2</Marker>
      </Page>
    </>
  );
}
